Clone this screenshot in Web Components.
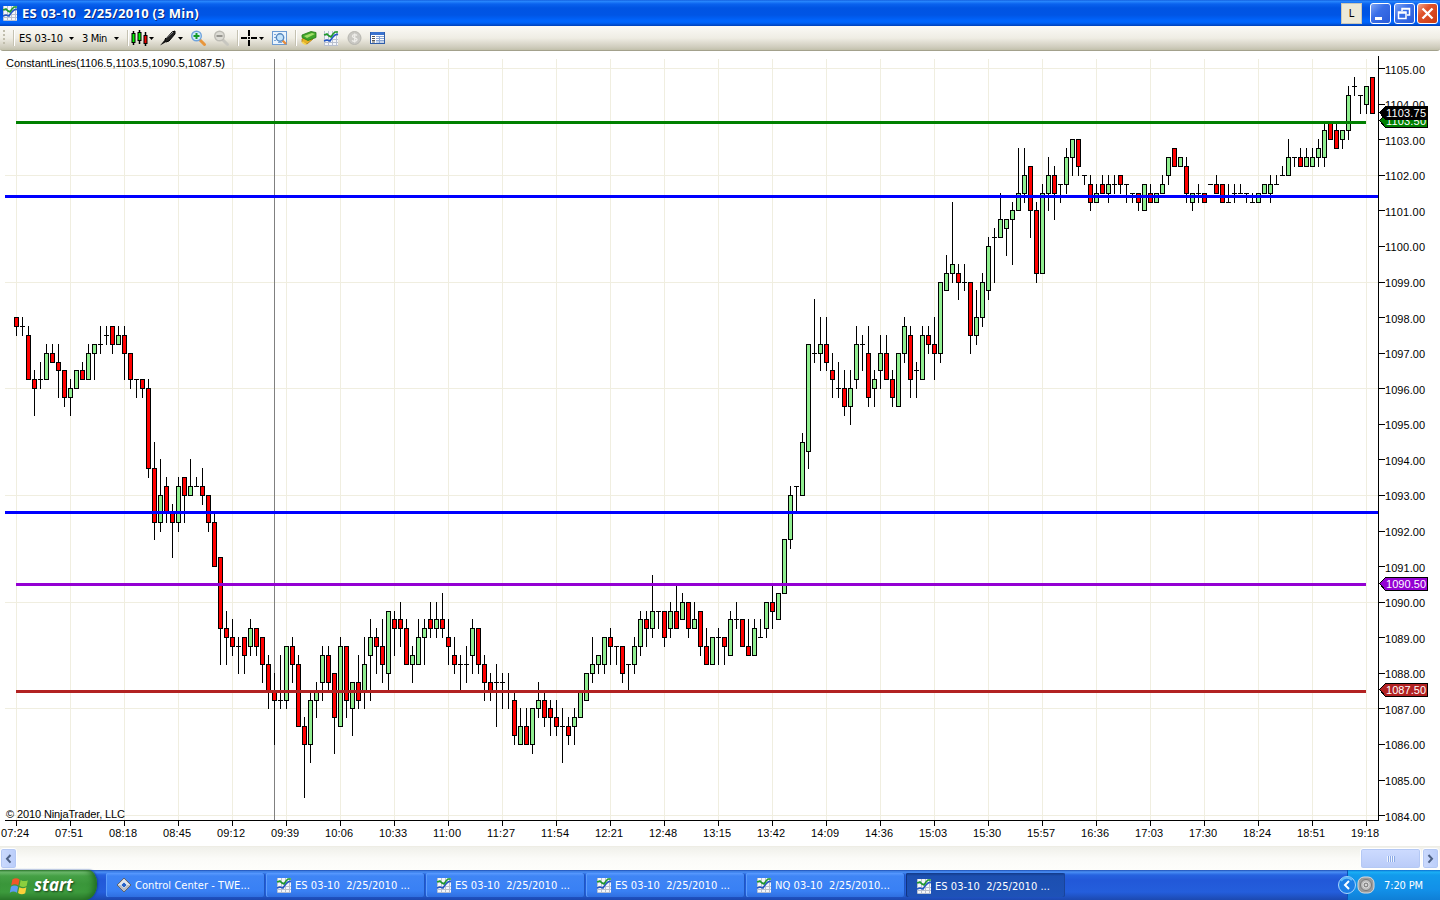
<!DOCTYPE html>
<html lang="en">
<head>
<meta charset="utf-8">
<title>ES 03-10 2/25/2010 (3 Min)</title>
<style>
  html, body{
    margin: 0;
    height: 100%;
    overflow: hidden;
    background: #fff;
    font-family: "DejaVu Sans Condensed", "Liberation Sans", sans-serif;
    font-size: 11px;
  }
</style>
</head>
<body>
<trading-desktop></trading-desktop>

<script>
// icons, all on a 16x16 box
const ICONS = {
  chart: `
    <rect x="1" y="1" width="14" height="14" fill="#f4f6fa"/>
    <path d="M1.5 1v14.5H15M5.5 1v14M9.5 1v14M13.5 1v14M1 5.5h14M1 9.5h14M1 12.5h14" stroke="#b9c0cf" fill="none"/>
    <path d="M1 11l3-1 3 1 2-3 3-3 3-1" stroke="#2457c4" stroke-width="1.6" fill="none"/>
    <path d="M1 5l3-1 2 2 2 1 2-3 2-2h3" stroke="#1f9a2b" stroke-width="1.6" fill="none"/>`,
  candles: `
    <path d="M2.500 1v14M8.500 0v14M14.500 2v14" stroke="#000" stroke-width="1.500"/>
    <rect x="1" y="3.500" width="3" height="9" fill="#00f000" stroke="#000"/>
    <rect x="7" y="2.500" width="3" height="8" fill="#00f000" stroke="#000"/>
    <rect x="13" y="5.500" width="3" height="8" fill="#f00000" stroke="#000"/>`,
  pen: `
    <path d="M5 9l7-7 3-1v3l-6 7-3 1z" fill="#222" stroke="#000"/>
    <path d="M6 8l7-6" stroke="#aaa" stroke-width="1"/>
    <path d="M0 15.500l5-6 2 2z" fill="#111"/>`,
  zoomIn: `
    <path d="M10 10l4.500 4.500" stroke="#e8963c" stroke-width="3" stroke-linecap="round"/>
    <circle cx="6.500" cy="6" r="4.800" fill="#d3ecfb" stroke="#6fa3dc" stroke-width="1.400"/>
    <path d="M6.500 3v6M3.500 6h6" stroke="#159a27" stroke-width="2"/>`,
  zoomOut: `
    <path d="M10 10l4.500 4.500" stroke="#c8c7c0" stroke-width="3" stroke-linecap="round"/>
    <circle cx="6.500" cy="6" r="4.800" fill="#dddcd5" stroke="#bcbbb4" stroke-width="1.400"/>
    <path d="M3.500 6h6" stroke="#96958f" stroke-width="2"/>`,
  cross: `
    <path d="M8 0v6M8 10v6M0 8h6M10 8h6" stroke="#000" stroke-width="2"/>
    <rect x="7" y="7" width="2" height="2" fill="#000"/>`,
  find: `
    <rect x=".5" y="1.500" width="14" height="13" fill="#eaf4fd" stroke="#6b9bd2"/>
    <path d="M2 4.500h2M2 7.500h2M2 10.500h2M6 12.500h4" stroke="#7da6d8"/>
    <path d="M10 10l4 4" stroke="#e58a3c" stroke-width="2.400"/>
    <circle cx="8" cy="7.500" r="3.700" fill="#c5e4fa" stroke="#5688c0" stroke-width="1.400"/>`,
  money: `
    <path d="M1 9l6-3 5 3-6 5-5-2z" fill="#e6b325" stroke="#b07a12" stroke-width=".8"/>
    <path d="M1 5l9-3.500 5 1v5l-8 3-6-3z" fill="#3fa52a" stroke="#277a18" stroke-width=".8"/>
    <path d="M3 6l8-3 3 1-8 4z" fill="#a4de6a"/>
    <path d="M1 12l4 2.500" stroke="#f4d452" stroke-width="2"/>`,
  dollar: `
    <circle cx="7.500" cy="8" r="6.500" fill="#c9c8c3" stroke="#b7b6b0"/>
    <path d="M10 5.500c-1-1.300-4.600-1.200-4.600.7 0 2.100 4.700 1.200 4.700 3.400 0 2-3.900 2.200-5 .7M7.700 3.500v9" stroke="#efeeea" stroke-width="1.300" fill="none"/>`,
  table: `
    <rect x=".5" y="2.500" width="14" height="11" fill="#fff" stroke="#2f5da8"/>
    <rect x="1" y="2" width="13" height="3" fill="#3a73cf"/>
    <path d="M2 6.500h3M2 8.500h3M2 10.500h3M2 12h3" stroke="#555"/>
    <path d="M6 6.500h8M6 8.500h8M6 10.500h8M6 12h8M9.500 6v7" stroke="#8aa6d4"/>`,
  diamond: `
    <path d="M8 1l7 7-7 7-7-7z" fill="#b9bec6" stroke="#5d6470"/>
    <path d="M8 2l6 6H2z" fill="#e3e6ea"/>
    <path d="M8 5l3 3-3 3-3-3z" fill="#2563c9" stroke="#fff" stroke-width=".6"/>`,
  drop: `<path d="M0 7h5L2.500 10z" fill="#000"/>`,
  flag: `
    <path d="M2 3c2-1.500 4-1.500 6 0L7 8C5 6.700 3 6.700 1 8z" fill="#f0562a"/>
    <path d="M9 3.300c2 1.300 4 1.300 6 .2l-1 5c-2 1.200-4 1-6-.2z" fill="#8ccf3e"/>
    <path d="M.8 9c2-1.300 4-1.300 6 0l-1 5c-2-1.400-4-1.400-6 0z" fill="#5f9cf5"/>
    <path d="M7.800 9.400c2 1.200 4 1.300 6 .1l-1 5c-2 1.200-4 1.100-6-.2z" fill="#fbd03a"/>`
}

// high, body top, body bottom, low: quarter points below 1105. u = up, d = down, n = unchanged
const BARS = `
28,28,29,30d 28,29,29,30n 29,30,35,35d 34,35,36,39d 33,35,35,36n 31,32,35,35u 31,32,33,33d 31,33,34,37d 34,34,37,38d
35,36,37,39u 34,34,36,36u 33,34,35,35d 31,32,35,35u 31,31,32,35u 29,31,31,32n 29,30,30,31n 29,29,31,32d 29,30,31,31u
29,30,32,35d 32,32,35,36d 35,35,35,37n 35,35,36,37d 35,36,45,46d 42,45,51,53d 44,48,51,52u 46,47,50,51d 49,50,51,55d
46,47,51,52u 46,46,48,51d 44,47,48,48u 46,47,47,47n 45,47,48,49d 48,48,51,52d 50,51,56,56d 55,55,63,67d 61,63,64,67d
62,64,65,66d 64,65,65,68n 64,64,66,68d 62,63,65,66u 63,63,65,66d 64,64,67,69d 66,67,70,72d 68,70,71,76d 66,71,71,72n
65,65,71,72u 64,65,67,69d 66,67,74,74d 73,74,76,82d 70,71,76,78u 69,70,71,73u 65,66,69,71u 65,66,69,70d 68,68,73,77d
64,65,74,74u 65,65,71,73d 69,69,72,75u 66,69,71,72d 64,67,70,72u 62,64,66,71u 63,64,65,68d 62,65,67,69d 61,61,68,70u
61,62,63,66d 60,62,63,65d 62,63,67,67d 65,66,67,69u 62,64,67,67u 62,63,64,67u 60,62,63,64d 60,62,63,64u 59,62,63,64d
62,64,65,67d 64,66,67,68d 66,67,67,70n 65,67,67,69n 62,63,66,68u 63,63,67,68d 66,67,69,71d 68,69,70,71d 67,69,69,74n
68,69,69,72n 68,70,70,72n 70,71,75,76d 72,74,76,76u 72,74,76,76d 72,72,76,77u 69,71,72,73u 70,71,73,74d 71,72,73,75d
71,73,74,75d 72,74,74,78n 73,74,75,76d 72,73,74,76u 70,70,73,73u 68,68,71,71u 64,67,68,69u 66,66,67,68u 64,64,67,68u
63,64,65,67d 65,65,65,67n 65,65,68,69d 67,67,67,70n 64,65,67,68u 61,62,65,66u 61,62,63,65d 57,61,63,64u 61,61,61,63n
61,61,64,65d 60,61,63,64u 58,61,63,63d 59,60,62,62u 60,60,63,64d 60,62,63,63u 61,61,65,66d 63,65,67,67d 64,64,67,67u
63,64,64,67n 64,64,65,67d 61,62,66,66u 60,62,62,63n 62,62,65,65d 62,65,66,66d 62,63,66,66u 62,64,64,64n 60,60,63,64u
58,60,61,63d 59,59,62,62u 53,53,59,59u 47,48,53,54u 47,47,47,50n 41,42,48,48u 31,31,43,45u 26,32,32,33n 28,31,32,34u
28,31,33,34d 32,34,35,37d 33,36,36,37n 34,36,38,39d 34,36,38,40u 29,31,35,36u 30,31,31,34n 29,32,37,38d 34,35,36,38u
30,32,34,36u 30,32,35,35d 34,35,37,38d 32,32,38,38u 28,29,32,33u 29,30,35,37d 33,34,34,37n 29,30,35,35u 29,30,31,32d
28,31,32,35d 24,24,32,33u 21,23,25,25u 15,22,23,24u 22,23,24,26d 22,24,24,25n 24,24,30,32d 25,28,30,31u 23,24,28,29u
19,20,25,26u 18,19,19,24n 14,17,19,19u 17,17,18,21u 15,16,17,22u 9,14,16,16u 9,12,14,15u 11,11,16,19d 15,16,23,24d
13,14,23,23u 10,12,14,16u 11,12,14,17d 13,13,13,15n 9,10,13,14u 8,8,10,12u 8,8,11,12d 12,12,12,13n 12,13,15,16d
13,14,15,15u 12,13,14,14d 12,13,14,15u 12,13,13,14n 12,12,13,14d 13,13,13,15n 14,14,14,15n 14,14,15,16d 13,13,16,16u
13,14,15,15d 14,14,15,15u 12,13,14,14u 10,10,12,13u 9,9,11,11d 10,10,11,11u 10,11,14,15d 14,14,15,16u 13,14,14,15n
14,14,15,15d 13,13,13,13n 12,13,14,14d 13,13,15,15d 13,15,15,15n 13,14,14,15n 13,14,14,14n 14,14,14,15n 14,15,15,15n
14,14,15,15u 13,13,14,14u 12,13,14,15u 12,13,13,13n 11,12,12,12n 8,10,12,12u 10,10,10,11n 9,10,11,11d 9,10,11,11u
9,10,11,11u 8,9,10,11u 6,7,10,11u 6,6,8,8d 6,7,9,9d 7,7,8,9u 2,3,7,8u 1,2,2,3n 3,3,3,5n
2,2,4,5u 1,1,5,5d`

const TIMES = `07:24 07:51 08:18 08:45 09:12 09:39 10:06 10:33 11:00 11:27 11:54 12:21 12:48
13:15 13:42 14:09 14:36 15:03 15:30 15:57 16:36 17:03 17:30 18:24 18:51 19:18`


class XpIcon extends HTMLElement{
  constructor(){
    super()
    this.attachShadow({mode: 'open'})
  }
  connectedCallback(){
    let size = this.getAttribute('size') || 16
    this.shadowRoot.innerHTML = `
    <style>
      :host{ display: block; flex: none; width: ${size}px; height: ${size}px; }
      svg{ display: block; overflow: visible; }
    </style>
    <svg width="${size}" height="${size}" viewBox="0 0 16 16">${ICONS[this.getAttribute('name')]}</svg>`
  }
}
customElements.define('xp-icon', XpIcon)


// one line of text, letter-spaced to a given width
class FitLabel extends HTMLElement{
  constructor(){
    super()
    this.attachShadow({mode: 'open'})
  }
  connectedCallback(){
    this.shadowRoot.innerHTML = `
    <style>
      :host{ display: block; flex: none; }
      span{ display: inline-block; white-space: pre; }
    </style>
    <span>${this.getAttribute('text')}</span>`
    let span = this.shadowRoot.querySelector('span')
    let want = Number(this.getAttribute('width'))
    let count = span.textContent.length
    span.style.letterSpacing = (want - span.getBoundingClientRect().width) / count + 'px'
  }
}
customElements.define('fit-label', FitLabel)


class TitleButton extends HTMLElement{
  constructor(){
    super()
    this.attachShadow({mode: 'open'})
  }
  connectedCallback(){
    let shapes = {
      min: '<path d="M5 15.500h7" stroke="#fff" stroke-width="3"/>',
      restore: '<path d="M8 8V5.500h7.500V12H13M8 6h8M4.500 9v6.500h7.500V9zM4 10h8" stroke="#fff" stroke-width="1.500" fill="none"/>',
      close: '<path d="M5.500 5.500l10 10M15.500 5.500l-10 10" stroke="#fff" stroke-width="2.300"/>'
    }
    let kind = this.getAttribute('kind')
    let bg = kind == 'close' ? '#f0a58c, #e0532b 35%, #c93a12' : '#7fa5f4, #3a6fe8 40%, #2a5bd8'
    this.shadowRoot.innerHTML = `
    <style>
      :host{
        display: block;
        box-sizing: border-box;
        width: 21px;
        height: 21px;
        border: 1px solid #fff;
        border-radius: 3px;
        background: linear-gradient(135deg, ${bg});
      }
      svg{ display: block; margin: -1px; }
    </style>
    <svg width="21" height="21">${shapes[kind]}</svg>`
  }
}
customElements.define('title-button', TitleButton)


class TitleBar extends HTMLElement{
  constructor(){
    super()
    this.attachShadow({mode: 'open'})
  }
  connectedCallback(){
    this.shadowRoot.innerHTML = `
    <style>
      :host{
        display: flex;
        align-items: center;
        box-sizing: border-box;
        height: 26px;
        padding: 0 2px 0 2px;
        background: linear-gradient(#0a50d4 0, #2b8bff 1px, #0a62ee 4px, #0054e3 8px, #0055e5 15px, #0066ff 21px, #0061f5 23px, #0040b8 26px);
      }
      fit-label{
        margin-left: 4px;
        color: #fff;
        font: bold 13px "Open Sans", "Noto Sans", sans-serif;
        text-shadow: 1px 1px 0 #0a2a80;
      }
      .link{
        box-sizing: border-box;
        width: 21px;
        height: 21px;
        margin-left: auto;
        margin-right: 8px;
        border: 1px solid #c9c6b6;
        background: #ece9d8;
        text-align: center;
        line-height: 20px;
      }
      title-button{ margin-left: 2.500px; }
    </style>
    <xp-icon name="chart" size="16"></xp-icon>
    <fit-label text="ES 03-10  2/25/2010 (3 Min)" width="177"></fit-label>
    <div class="link">L</div>
    <title-button kind="min" style="margin-left:0"></title-button>
    <title-button kind="restore"></title-button>
    <title-button kind="close"></title-button>`
  }
}
customElements.define('title-bar', TitleBar)


// fixed width slot in the toolbar
class ToolCell extends HTMLElement{
  constructor(){
    super()
    this.attachShadow({mode: 'open'})
  }
  connectedCallback(){
    this.shadowRoot.innerHTML = `
    <style>
      :host{ display: flex; align-items: center; flex: none; width: ${this.getAttribute('w')}px; height: 100%; }
      :host([kind=sep])::before{ content: ""; width: 1px; height: 16px; background: #c5c2b2; border-right: 1px solid #fff; }
      :host([kind=grip])::before{
        content: "";
        width: 2px;
        height: 16px;
        margin-left: 3px;
        background: repeating-linear-gradient(#c1bead 0 2px, transparent 2px 4px);
      }
    </style>
    <slot></slot>`
  }
}
customElements.define('tool-cell', ToolCell)


class ToolBar extends HTMLElement{
  constructor(){
    super()
    this.attachShadow({mode: 'open'})
  }
  connectedCallback(){
    let icon = (w, name) => `<tool-cell w="${w}"><xp-icon name="${name}"></xp-icon></tool-cell>`
    let sep = w => `<tool-cell w="${w}" kind="sep"></tool-cell>`
    let text = (w, str, len) => `<tool-cell w="${w}"><fit-label text="${str}" width="${len}"></fit-label></tool-cell>`
    this.shadowRoot.innerHTML = `
    <style>
      :host{ display: block; height: 25px; background: #fff; }
      .bar{
        display: flex;
        box-sizing: border-box;
        height: 25px;
        border-bottom: 1px solid #a3a18c;
        border-radius: 0 0 3px 3px;
        background: linear-gradient(#fbfaf6, #efede4 50%, #cfccbd 88%, #c2c0ab);
      }
    </style>
    <div class="bar">
      <tool-cell w="13" kind="grip"></tool-cell>
      ${sep(6)}${text(50, 'ES 03-10', 44)}${icon(13, 'drop')}${text(32, '3 Min', 25)}${icon(13, 'drop')}
      ${sep(4)}${icon(18, 'candles')}${icon(11, 'drop')}${icon(18, 'pen')}${icon(12, 'drop')}
      ${icon(23, 'zoomIn')}${icon(24, 'zoomOut')}
      ${sep(4)}${icon(18, 'cross')}${icon(13, 'drop')}${icon(23, 'find')}
      ${sep(6)}${icon(22, 'money')}${icon(24, 'chart')}${icon(23, 'dollar')}${icon(23, 'table')}
    </div>`
  }
}
customElements.define('tool-bar', ToolBar)


class PriceChart extends HTMLElement{
  constructor(){
    super()
    this.attachShadow({mode: 'open'})
  }

  y(quarters){
    return Math.floor(68.62 + quarters * 747 / 84)
  }

  grid(){
    let out = ''
    for(let q = 0; q <= 84; q += 12) out += `<rect x="5" y="${this.y(q)}" width="1373" height="1"/>`
    for(let x = 16; x <= 1366; x += 54) out += `<rect x="${x}" y="59" width="1" height="761"/>`
    return `<g fill="#f0eee0">${out}</g>`
  }

  bars(){
    let fill = {u: '#90ee90', d: '#ff0000'}
    return BARS.trim().split(/\s+/).map((bar, i) => {
      let dir = bar.slice(-1)
      let [high, top, bottom, low] = bar.slice(0, -1).split(',').map(q => this.y(q))
      let x = 16 + 6 * i
      let out = `<rect x="${x}" y="${high}" width="1" height="${low - high + 1}"/>`
      out += `<rect x="${x - 2}" y="${top}" width="5" height="${bottom - top + 1}"/>`
      if(dir != 'n') out += `<rect x="${x - 1}" y="${top + 1}" width="3" height="${bottom - top - 1}" fill="${fill[dir]}"/>`
      return out
    }).join('')
  }

  level(y, color, x1 = 16, x2 = 1366){
    return `<rect x="${x1}" y="${y}" width="${x2 - x1}" height="3" fill="${color}"/>`
  }

  axes(){
    let out = `<rect x="5" y="820" width="1374" height="1"/><rect x="1378" y="56" width="1" height="765"/>`
    for(let q = 0; q <= 84; q += 4){
      let textY = Math.round(68.62 + q * 747 / 84) + 5
      out += `<rect x="1379" y="${this.y(q)}" width="6" height="1"/>
        <text x="1385" y="${textY}" textLength="40">${(1105 - q / 4).toFixed(2)}</text>`
    }
    TIMES.split(/\s+/).forEach((time, i) => {
      let x = 16 + 54 * i
      out += `<rect x="${x}" y="821" width="1" height="5"/><text x="${x - 15}" y="837" textLength="28">${time}</text>`
    })
    return out
  }

  tag(y, price, color){
    return `<path d="M1379.500 ${y + .5}l6-6h42v13h-42z" fill="${color}" stroke="#000"/>
      <text x="1386" y="${y + 5}" textLength="40" fill="#fff">${price}</text>`
  }

  connectedCallback(){
    this.shadowRoot.innerHTML = `
    <style>
      :host{ display: block; height: 795px; background: #fff; }
      svg{ display: block; }
      text{ font: 11px "Liberation Sans", Arial, sans-serif; }
    </style>
    <svg width="1440" height="795" viewBox="0 51 1440 795" shape-rendering="crispEdges">
      ${this.grid()}
      <rect x="274" y="59" width="1" height="761" fill="#808080"/>
      ${this.bars()}
      ${this.level(121, '#008000')}
      ${this.level(583, '#9400d3')}
      ${this.level(690, '#b22222')}
      ${this.level(195, '#0000ff', 5, 1378)}
      ${this.level(511, '#0000ff', 5, 1378)}
      ${this.axes()}
      ${this.tag(120, '1103.50', '#008000')}
      ${this.tag(112, '1103.75', '#000')}
      ${this.tag(583, '1090.50', '#9400d3')}
      ${this.tag(689, '1087.50', '#b22222')}
      <text x="6" y="67" textLength="219">ConstantLines(1106.5,1103.5,1090.5,1087.5)</text>
      <text x="6" y="818" textLength="119">© 2010 NinjaTrader, LLC</text>
    </svg>`
  }
}
customElements.define('price-chart', PriceChart)


class ScrollStrip extends HTMLElement{
  constructor(){
    super()
    this.attachShadow({mode: 'open'})
  }
  connectedCallback(){
    this.shadowRoot.innerHTML = `
    <style>
      :host{
        display: flex;
        box-sizing: border-box;
        height: 24px;
        padding: 1px 1px 1px 0;
        border-top: 1px solid #eeede5;
        background: linear-gradient(#f0f0ea, #fbfbf8 50%, #fefefb);
      }
      .btn{
        display: flex;
        align-items: center;
        justify-content: center;
        box-sizing: border-box;
        width: 17px;
        height: 21px;
        border: 1px solid #fff;
        border-radius: 3px;
        background: linear-gradient(90deg, #cbdafd, #bacdfa);
        box-shadow: inset 0 0 0 1px #b4c8f4;
      }
      .thumb{ width: 61px; margin-left: auto; margin-right: 1px; background: linear-gradient(#cddbff, #b9cbf8); }
      .thumb i{ width: 1px; height: 6px; background: #eef4fe; border-right: 1px solid #8caae6; }
    </style>
    <div class="btn"><svg width="7" height="10"><path d="M5.500 1L2 4.800l3.500 3.800" stroke="#4d6185" stroke-width="2" fill="none"/></svg></div>
    <div class="btn thumb"><i></i><i></i><i></i><i></i></div>
    <div class="btn"><svg width="7" height="10"><path d="M1.500 1L5 4.800 1.500 8.600" stroke="#4d6185" stroke-width="2" fill="none"/></svg></div>`
  }
}
customElements.define('scroll-strip', ScrollStrip)


class TaskButton extends HTMLElement{
  constructor(){
    super()
    this.attachShadow({mode: 'open'})
  }
  connectedCallback(){
    this.shadowRoot.innerHTML = `
    <style>
      :host{
        display: flex;
        align-items: center;
        box-sizing: border-box;
        width: 159px;
        height: 24px;
        margin-right: 1px;
        padding-left: 10px;
        border-radius: 2px;
        color: #fff;
        background: linear-gradient(#5a9bff, #3f85f5 3px, #3980f4 18px, #2f6fe0);
        box-shadow: inset 1px 0 0 #5c9dfb, inset -1px 0 0 #2058c0;
      }
      :host([active]){
        padding-top: 2px;
        background: linear-gradient(#123a88, #1c4fb0 3px, #1e52b7);
        box-shadow: inset 1px 0 0 #103480, inset -1px 0 0 #1a4499;
      }
      fit-label{ margin-left: 3px; }
    </style>
    <xp-icon name="${this.getAttribute('icon')}" size="16"></xp-icon>
    <fit-label text="${this.getAttribute('text')}" width="115"></fit-label>`
  }
}
customElements.define('task-button', TaskButton)


class StartButton extends HTMLElement{
  constructor(){
    super()
    this.attachShadow({mode: 'open'})
  }
  connectedCallback(){
    this.shadowRoot.innerHTML = `
    <style>
      :host{
        display: flex;
        align-items: center;
        box-sizing: border-box;
        width: 97px;
        height: 30px;
        padding-left: 10px;
        border-radius: 0 9px 12px 0 / 0 14px 16px 0;
        color: #fff;
        background: linear-gradient(#2f7a2f, #71bd71 2px, #45a045 6px, #3a963a 14px, #3c9a3c 22px, #2c7a2c);
        box-shadow: inset -5px 0 6px -2px #1f6a1f, 1px 0 2px #123f9c;
      }
      fit-label{
        margin-left: 5px;
        font: italic bold 17px/20px "Open Sans", "Noto Sans", sans-serif;
        text-shadow: 1px 1px 2px #16401a;
      }
    </style>
    <xp-icon name="flag" size="19"></xp-icon>
    <fit-label text="start" width="39"></fit-label>`
  }
}
customElements.define('start-button', StartButton)


class SystemTray extends HTMLElement{
  constructor(){
    super()
    this.attachShadow({mode: 'open'})
  }
  connectedCallback(){
    this.shadowRoot.innerHTML = `
    <style>
      :host{
        display: flex;
        align-items: center;
        width: 93px;
        height: 30px;
        margin-left: auto;
        color: #fff;
        background: linear-gradient(#0c6fd0, #1bb0f5 2px, #129bec 5px, #1290e8 20px, #0f7fd6);
        box-shadow: inset 1px 0 0 #0b53b5;
      }
      svg{ display: block; flex: none; margin-left: -9px; }
      fit-label{ margin-left: 7px; }
    </style>
    <svg width="39" height="20">
      <circle cx="9" cy="10" r="8.500" fill="#1c7fe6" stroke="#a9d6fb"/>
      <path d="M3 6a7 7 0 0 1 11-1" stroke="#63bcf9" stroke-width="2" fill="none"/>
      <path d="M11 6L7 10l4 4" stroke="#fff" stroke-width="2" fill="none"/>
      <rect x="20" y="2" width="16" height="16" rx="6" fill="#9b9b9b" stroke="#dcdcdc"/>
      <circle cx="28" cy="10" r="5.500" fill="#bdbdbd" stroke="#777"/>
      <circle cx="28" cy="10" r="3" fill="#8c8c8c" stroke="#d9d9d9"/>
      <circle cx="28" cy="10" r="1" fill="#eee"/>
    </svg>
    <fit-label text="7:20 PM" width="39"></fit-label>`
  }
}
customElements.define('system-tray', SystemTray)


class TaskBar extends HTMLElement{
  constructor(){
    super()
    this.attachShadow({mode: 'open'})
  }
  connectedCallback(){
    this.shadowRoot.innerHTML = `
    <style>
      :host{
        display: flex;
        align-items: center;
        height: 30px;
        background: linear-gradient(#1f4fb4, #4a90f5 2px, #2663e0 5px, #2258d8 10px, #245edc 22px, #1c49b0);
      }
      .tasks{ display: flex; margin-left: 9px; }
    </style>
    <start-button></start-button>
    <div class="tasks">
      <task-button icon="diamond" text="Control Center - TWE..."></task-button>
      <task-button icon="chart" text="ES 03-10  2/25/2010 ..."></task-button>
      <task-button icon="chart" text="ES 03-10  2/25/2010 ..."></task-button>
      <task-button icon="chart" text="ES 03-10  2/25/2010 ..."></task-button>
      <task-button icon="chart" text="NQ 03-10  2/25/2010..."></task-button>
      <task-button icon="chart" text="ES 03-10  2/25/2010 ..." active></task-button>
    </div>
    <system-tray></system-tray>`
  }
}
customElements.define('task-bar', TaskBar)


class TradingDesktop extends HTMLElement{
  constructor(){
    super()
    this.attachShadow({mode: 'open'})
  }
  connectedCallback(){
    this.shadowRoot.innerHTML = `
    <style>
      :host{ display: flex; flex-direction: column; width: 1440px; height: 900px; }
    </style>
    <title-bar></title-bar>
    <tool-bar></tool-bar>
    <price-chart></price-chart>
    <scroll-strip></scroll-strip>
    <task-bar></task-bar>`
  }
}
customElements.define('trading-desktop', TradingDesktop)
</script>
</body>
</html>
